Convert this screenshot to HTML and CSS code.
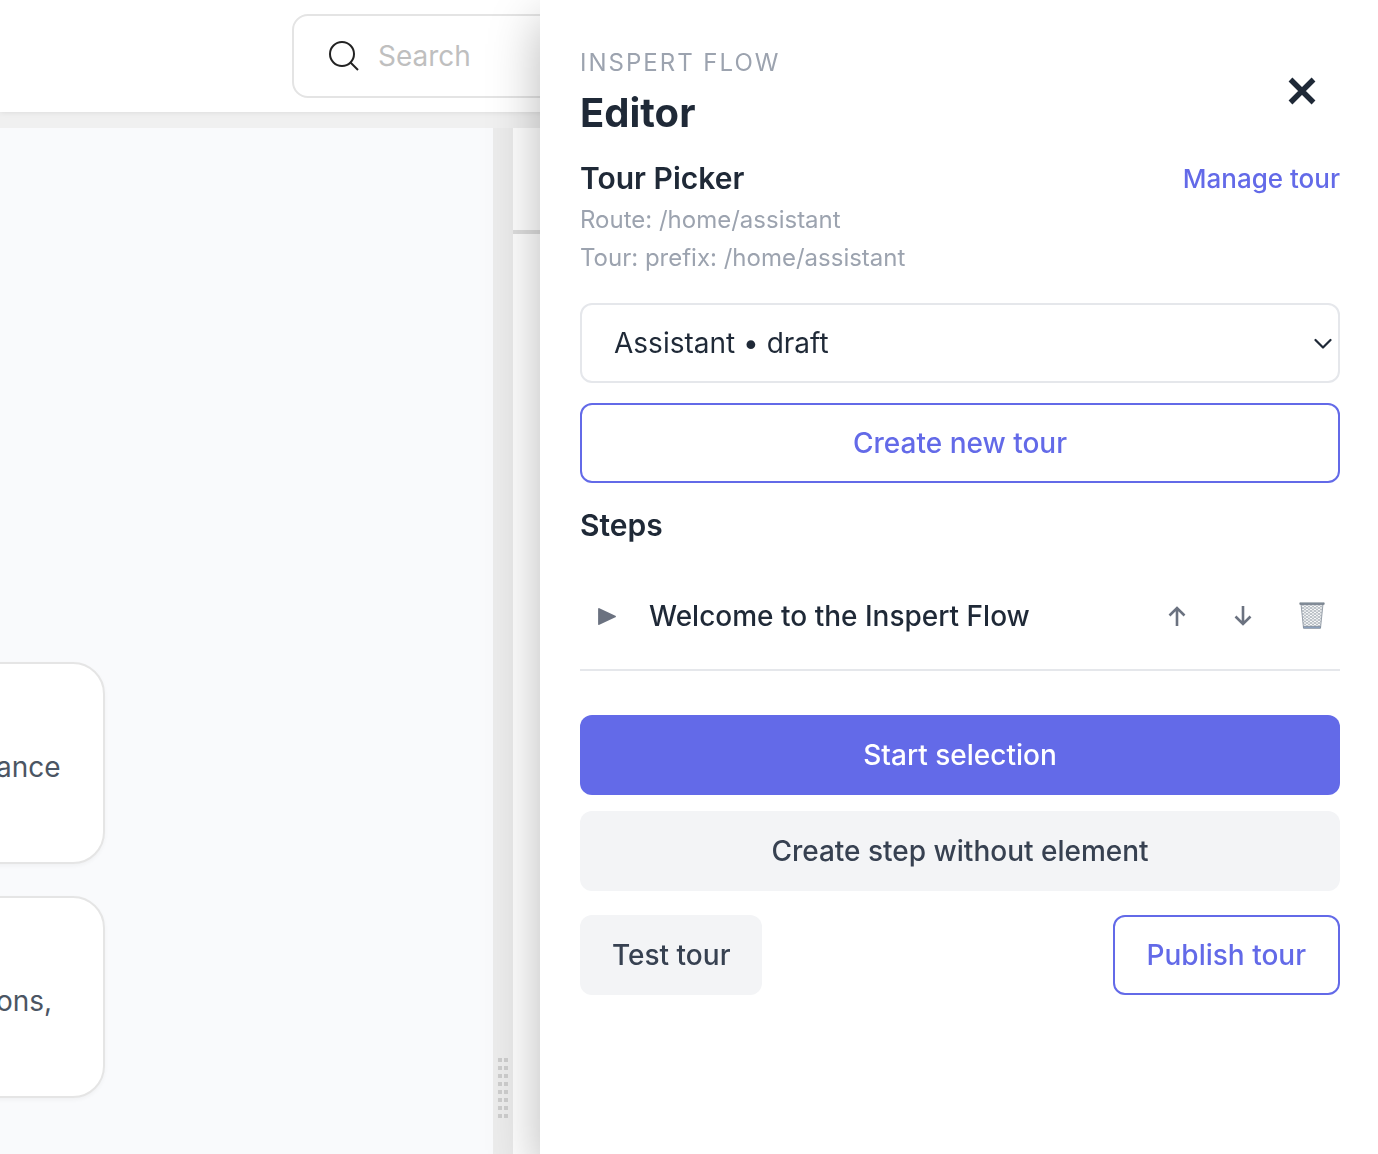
FILE: index.html
```
<!DOCTYPE html>
<html lang="en">
<head>
    <meta charset="UTF-8">
    <meta name="viewport" content="width=device-width, initial-scale=1.0">
    <title>Inspert Flow Editor</title>
    <link rel="stylesheet" href="styles.css">
</head>
<body>
    <div class="app">
        <header class="topbar">
            <label class="search">
                <svg class="search-icon" viewBox="0 0 30 30" fill="none" stroke="#222" stroke-width="2" aria-hidden="true">
                    <circle cx="13" cy="13" r="12"/>
                    <path d="M21.5 21.5L29 29"/>
                </svg>
                <input class="search-input" type="search" placeholder="Search" aria-label="Search">
            </label>
        </header>
        <div class="workspace">
            <main class="chat">
                <div class="card">ance</div>
                <div class="card">ons,</div>
            </main>
            <div class="splitter">
                <div class="splitter-grip"></div>
            </div>
            <div class="side">
                <div class="side-header"></div>
            </div>
        </div>
    </div>

    <aside class="drawer">
        <div class="drawer-header">
            <div>
                <p class="eyebrow">INSPERT FLOW</p>
                <h1 class="title">Editor</h1>
            </div>
            <button class="close-button" type="button" aria-label="Close">
                <svg class="close-icon" viewBox="0 0 28 28" fill="none" stroke="currentColor" stroke-width="5.4" aria-hidden="true">
                    <path d="M2.5 2.5L25.5 25.5M25.5 2.5L2.5 25.5"/>
                </svg>
            </button>
        </div>

        <section class="picker">
            <div class="section-row">
                <h2 class="section-title">Tour Picker</h2>
                <a class="manage-link" href="#">Manage tour</a>
            </div>
            <p class="meta">Route: /home/assistant</p>
            <p class="meta">Tour: prefix: /home/assistant</p>
            <div class="select-wrap">
                <select class="tour-select" aria-label="Tour">
                    <option>Assistant • draft</option>
                </select>
                <svg class="select-arrow" viewBox="0 0 18 12" fill="none" stroke="currentColor" stroke-width="2.2" stroke-linecap="round" stroke-linejoin="round" aria-hidden="true">
                    <path d="M1.5 2L9 9.5L16.5 2"/>
                </svg>
            </div>
            <button class="btn btn-outline" type="button">Create new tour</button>
        </section>

        <section class="steps">
            <h2 class="section-title">Steps</h2>
            <div class="step">
                <button class="step-toggle" type="button" aria-label="Expand step">
                    <svg class="toggle-icon" viewBox="0 0 18 18" aria-hidden="true">
                        <path d="M1 2L17 9.5L1 17Z" fill="currentColor" stroke="currentColor" stroke-width="1.8" stroke-linejoin="round"/>
                    </svg>
                </button>
                <span class="step-name">Welcome to the Inspert Flow</span>
                <div class="step-actions">
                    <button class="icon-button" type="button" aria-label="Move up">
                        <svg class="arrow-icon" viewBox="0 0 18 20" fill="none" stroke="currentColor" stroke-width="2.6" aria-hidden="true">
                            <path d="M9 20V2M1.5 9.5L9 2L16.5 9.5"/>
                        </svg>
                    </button>
                    <button class="icon-button" type="button" aria-label="Move down">
                        <svg class="arrow-icon" viewBox="0 0 18 20" fill="none" stroke="currentColor" stroke-width="2.6" aria-hidden="true">
                            <path d="M9 0V18M1.5 10.5L9 18L16.5 10.5"/>
                        </svg>
                    </button>
                    <button class="icon-button delete-button" type="button" aria-label="Delete step">
                        <svg class="trash-icon" viewBox="0 0 26 28" fill="none" aria-hidden="true">
                            <defs>
                                <pattern id="mesh" width="4" height="3" patternUnits="userSpaceOnUse">
                                    <path d="M0 0L4 3M4 0L0 3" stroke="#9aa2ab" stroke-width="0.7"/>
                                </pattern>
                            </defs>
                            <path d="M2 2H24L21.5 26H4.5Z" fill="#f8f9fa"/>
                            <path d="M2 2H24L21.5 26H4.5Z" fill="url(#mesh)" stroke="#98a0aa" stroke-width="1"/>
                            <path d="M4.5 24.5H21.5V26.2H4.5Z" fill="#8fa6c6" stroke="#7f8a98" stroke-width="0.7"/>
                            <path d="M0.8 0.8H25.2V2.4H0.8Z" fill="#8a949f" stroke="#66707c" stroke-width="0.6"/>
                        </svg>
                    </button>
                </div>
            </div>
        </section>

        <div class="create-actions">
            <button class="btn btn-primary" type="button">Start selection</button>
            <button class="btn btn-muted" type="button">Create step without element</button>
        </div>
        <div class="tour-actions">
            <button class="btn btn-muted" type="button">Test tour</button>
            <button class="btn btn-outline" type="button">Publish tour</button>
        </div>
    </aside>
</body>
</html>
```
FILE: styles.css
```
* {
    box-sizing: border-box;
}
body {
    margin: 0;
    font-family: Inter, "Liberation Sans", sans-serif;
    font-size: 28px;
    color: #1f2937;
    background: #f0f0f0;
    overflow: hidden;
}
h1, h2, p {
    margin: 0;
}
button, input, select {
    font: inherit;
    color: inherit;
}
button {
    padding: 0;
    border: none;
    background: none;
    cursor: pointer;
}
svg {
    display: block;
}

/* Page behind the drawer */
.app {
    display: flex;
    flex-direction: column;
    gap: 16px;
    height: 100vh;
}
.topbar {
    padding: 14px 32px 14px 292px;
    background: #fff;
    box-shadow: 0 0 6px rgba(0, 0, 0, 0.1);
}
.search {
    display: flex;
    align-items: center;
    gap: 19px;
    height: 84px;
    padding: 0 35px;
    border: 2px solid #e4e4e4;
    border-radius: 16px;
}
.search-icon {
    width: 30px;
    height: 30px;
}
.search-input {
    flex: 1;
    min-width: 0;
    padding: 0;
    border: none;
    outline: none;
    background: none;
}
.search-input::placeholder {
    color: #bfbfbf;
    opacity: 1;
}
.workspace {
    display: flex;
    flex: 1;
    min-height: 0;
}
.chat {
    display: flex;
    flex: 0 0 493px;
    flex-direction: column;
    justify-content: flex-end;
    align-items: flex-start;
    gap: 32px;
    padding-bottom: 56px;
    background: #f9fafc;
}
.card {
    width: 145px;
    height: 202px;
    margin-left: -40px;
    padding: 82px 34px;
    border: 2px solid #e5e5e5;
    border-radius: 32px;
    background: #fff;
    box-shadow: 0 2px 4px rgba(0, 0, 0, 0.04);
    color: #4b5563;
    line-height: 42px;
}
.splitter {
    display: flex;
    flex: 0 0 20px;
    justify-content: center;
    align-items: flex-end;
    padding-bottom: 36px;
    background: #ececec;
}
.splitter-grip {
    width: 10px;
    height: 60px;
    background: repeating-linear-gradient(#ececec00 0 4px, #ececec 4px 8px), linear-gradient(90deg, #cdcdcd 4px, #ececec 4px 6px, #cdcdcd 6px);
}
.side {
    flex: 1;
    background: #fff;
}
.side-header {
    height: 106px;
    border-bottom: 4px solid #dedede;
}

/* Editor drawer */
.drawer {
    position: fixed;
    top: 0;
    right: 0;
    bottom: 0;
    width: 838px;
    padding: 41px 38px 40px 40px;
    background: #fff;
    box-shadow: 0 20px 48px rgba(0, 0, 0, 0.28);
}
.drawer-header {
    display: flex;
    justify-content: space-between;
    align-items: center;
}
.eyebrow {
    color: #9ca3af;
    font-size: 24px;
    line-height: 44px;
    letter-spacing: 2px;
}
.title {
    font-size: 40px;
    font-weight: 700;
    line-height: 55px;
}
.close-button {
    padding: 24px;
}
.close-icon {
    width: 28px;
    height: 28px;
}
.picker {
    margin-top: 16px;
}
.section-row {
    display: flex;
    justify-content: space-between;
    align-items: center;
}
.section-title {
    font-size: 30px;
    font-weight: 600;
    line-height: 45px;
}
.manage-link {
    color: #636ae8;
    font-size: 26px;
    font-weight: 500;
    text-decoration: none;
}
.meta {
    color: #9ca3af;
    font-size: 24px;
    line-height: 38px;
}
.select-wrap {
    position: relative;
    margin: 26px 0 20px;
}
.tour-select {
    display: block;
    width: 100%;
    height: 80px;
    padding: 0 32px;
    border: 2px solid #e5e7eb;
    border-radius: 12px;
    background: #fff;
    appearance: none;
}
.select-arrow {
    position: absolute;
    top: 35px;
    right: 8px;
    width: 18px;
    height: 12px;
    pointer-events: none;
}
.btn {
    height: 80px;
    padding: 0 32px;
    border-radius: 12px;
    font-weight: 500;
}
.btn-outline {
    border: 2px solid #636ae8;
    background: #fff;
    color: #636ae8;
}
.btn-primary {
    background: #636ae8;
    color: #fff;
}
.btn-muted {
    background: #f3f4f6;
    color: #374151;
}
.picker .btn {
    width: 100%;
}
.steps {
    margin-top: 20px;
}
.step {
    display: flex;
    align-items: center;
    margin-top: 15px;
    padding: 32px 0;
    border-bottom: 2px solid #e5e7eb;
    line-height: 42px;
}
.step-toggle {
    padding: 0 33px 0 18px;
    color: #6b7280;
}
.toggle-icon {
    width: 18px;
    height: 18px;
}
.step-name {
    flex: 1;
    font-weight: 500;
}
.step-actions {
    display: flex;
    gap: 16px;
    color: #6b7280;
}
.icon-button {
    display: flex;
    justify-content: center;
    align-items: center;
    width: 50px;
    height: 42px;
}
.delete-button {
    width: 56px;
}
.arrow-icon {
    width: 18px;
    height: 20px;
}
.trash-icon {
    width: 26px;
    height: 28px;
}
.create-actions {
    display: flex;
    flex-direction: column;
    gap: 16px;
    margin-top: 44px;
}
.tour-actions {
    display: flex;
    justify-content: space-between;
    margin-top: 24px;
}
```
